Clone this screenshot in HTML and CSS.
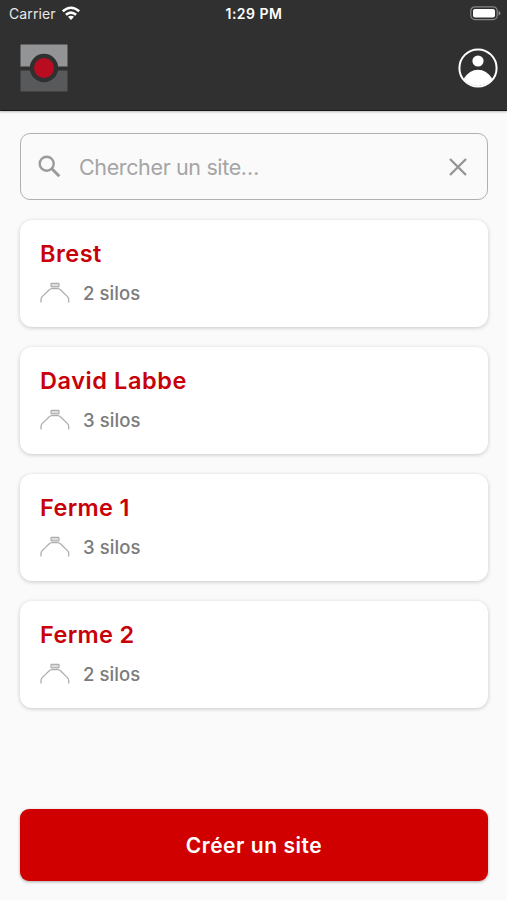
FILE: index.html
```html
<!DOCTYPE html>
<html lang="fr">
<head>
<meta charset="utf-8">
<title>Sites</title>
<link rel="stylesheet" href="styles.css">
</head>
<body>
<svg class="defs" width="0" height="0" aria-hidden="true">
  <symbol id="silo" viewBox="0 0 30 22">
    <path d="M1 20.5V17.6Q1 15.8 2.2 14.6L9 8Q10.4 6.6 11.8 6.6H17.8Q19.3 6.6 20.7 8L27.5 14.6Q28.7 15.8 28.7 17.6V20.5" fill="none" stroke="#aeaeae" stroke-width="1.3"/>
    <rect x="11" y="1.4" width="8" height="3.4" rx=".5" fill="#dedede" stroke="#adadad" stroke-width="1.2"/>
  </symbol>
</svg>
<header class="header">
  <div class="status">
    <div class="network"><span class="carrier">Carrier</span>
      <svg width="20" height="15" viewBox="0 0 20 15" fill="none" stroke="#fff" stroke-width="2.5"><path d="M1.8 5.3Q10-1.7 18.2 5.3M4.9 8.8Q10 4.4 15.1 8.8"/><path d="M7 10.8Q10 8.8 13 10.8L10 14Z" fill="#fff" stroke="none"/></svg>
    </div>
    <span class="clock">1:29 PM</span>
    <svg class="battery" width="31" height="15" viewBox="0 0 31 15"><rect x=".8" y=".8" width="26.4" height="12.8" rx="4" fill="none" stroke="#858585" stroke-width="1.2"/><rect x="3" y="3" width="22" height="8.5" rx="2" fill="#fff"/><path d="M28.5 4.8Q30.5 5.6 30.5 7.2T28.5 9.6Z" fill="#858585"/></svg>
  </div>
  <div class="toolbar">
    <svg width="48" height="48" viewBox="-.5 -.5 48 48"><path d="M0 0H47V22H0Z" fill="#929496"/><path d="M0 26H47V47H0Z" fill="#58595b"/><circle cx="23.5" cy="23.5" r="14.2" fill="#303030"/><circle cx="23.5" cy="23.5" r="10" fill="#b90c20"/></svg>
    <svg width="40" height="40" viewBox="0 0 40 40"><circle cx="20" cy="20" r="18.6" fill="none" stroke="#fff" stroke-width="2"/><circle cx="20" cy="13" r="5.6" fill="#fff"/><path d="M5.5 31Q11.5 21.8 20 21.8T34.5 31A18.6 18.6 0 0 1 5.5 31Z" fill="#fff"/></svg>
  </div>
</header>
<main class="content">
  <div class="search">
    <svg class="glass" width="24" height="24" viewBox="0 0 24 24" fill="none" stroke="#9b9b9b"><circle cx="8.7" cy="8.7" r="7" stroke-width="2.4"/><path d="M13.8 13.8L21.3 21.3" stroke-width="3"/></svg>
    <span class="placeholder">Chercher un site…</span>
    <svg width="18" height="18" viewBox="0 0 18 18" fill="none" stroke="#949494" stroke-width="2.3"><path d="M1 1L17 17M17 1L1 17"/></svg>
  </div>
  <section class="card"><h2><span class="brest">Brest</span></h2><p><svg width="30" height="22"><use href="#silo"/></svg><span>2 silos</span></p></section>
  <section class="card"><h2><span class="david">David Labbe</span></h2><p><svg width="30" height="22"><use href="#silo"/></svg><span>3 silos</span></p></section>
  <section class="card"><h2><span class="ferme">Ferme 1</span></h2><p><svg width="30" height="22"><use href="#silo"/></svg><span>3 silos</span></p></section>
  <section class="card"><h2><span class="ferme">Ferme 2</span></h2><p><svg width="30" height="22"><use href="#silo"/></svg><span>2 silos</span></p></section>
  <button class="create">Créer un site</button>
</main>
</body>
</html>
```
FILE: styles.css
```css
* { box-sizing: border-box; }
body {
  margin: 0;
  height: 900px;
  display: flex;
  flex-direction: column;
  overflow: hidden;
  background: #fafafa;
  font-family: Inter, "Liberation Sans", sans-serif;
}
.defs { display: none; }
svg { display: block; flex: none; }
.header {
  height: 111px;
  background: #303030;
  border-bottom: 1px solid #191919;
  color: #fff;
  box-shadow: 0 1px 2px #0004;
}
.status {
  height: 28px;
  padding: 0 6px 2px 9px;
  display: grid;
  grid-template-columns: 1fr auto 1fr;
  align-items: center;
}
.network { display: flex; align-items: center; gap: 5px; }
.carrier { font-size: 14px; color: #e8e8e8; letter-spacing: .1px; }
.clock { font-size: 14px; font-weight: 600; letter-spacing: .5px; margin-left: -2px; }
.battery { justify-self: end; }
.toolbar {
  height: 80px;
  padding: 0 9px 0 20px;
  display: flex;
  align-items: center;
  justify-content: space-between;
}
.content {
  flex: 1;
  display: flex;
  flex-direction: column;
  gap: 20px;
  padding: 22px 19px 19px 20px;
}
.search {
  height: 67px;
  border: 1.5px solid #b0b0b0;
  border-radius: 10px;
  display: flex;
  align-items: center;
  padding: 0 20px 0 17px;
}
.placeholder {
  flex: 1;
  margin-left: 17px;
  font-size: 21.5px;
  letter-spacing: -.37px;
  color: #a5a5a5;
}
.card {
  height: 107px;
  padding: 19px 20px;
  border-radius: 12px;
  background: #fff;
  box-shadow: 0 1px 4px #0003;
}
.card h2 {
  margin: 0;
  font-size: 23.5px;
  font-weight: 600;
  line-height: 30px;
  color: #c80008;
}
.brest { letter-spacing: .5px; }
.david { letter-spacing: .58px; }
.ferme { letter-spacing: .35px; }
.card p {
  margin: 9px 0 0;
  height: 30px;
  display: flex;
  align-items: center;
  gap: 13px;
  font-size: 18.5px;
  font-weight: 500;
  letter-spacing: .07px;
  color: #7b7b7b;
}
.create {
  margin-top: auto;
  height: 72px;
  border: 0;
  border-radius: 9px;
  background: #d00000;
  box-shadow: 0 1px 3px #0005;
  color: #fff;
  font: 600 21px Inter, "Liberation Sans", sans-serif;
  letter-spacing: .55px;
}
```
